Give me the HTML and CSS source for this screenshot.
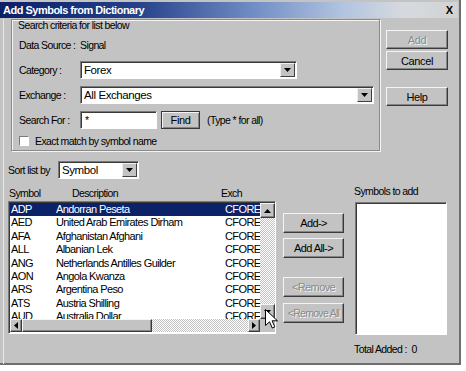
FILE: index.html
```html
<!DOCTYPE html>
<html>
<head>
<meta charset="utf-8">
<link rel="stylesheet" href="styles.css">
</head>
<body>
<div class="dialog">
  <div class="titlebar">
    <span class="title">Add Symbols from Dictionary</span>
    <span class="close">X</span>
  </div>
  <div class="body">
    <div class="top">
      <div class="group">
        <div class="legend">Search criteria for list below</div>
        <div class="row r-source"><span class="lbl">Data Source :</span><span>Signal</span></div>
        <div class="row r-cat"><span class="lbl">Category :</span>
          <div class="combo combo-cat"><span class="combo-text">Forex</span><span class="drop"><svg width="7" height="4" viewBox="0 0 7 4"><path d="M0 0h7L3.5 4z"/></svg></span></div>
        </div>
        <div class="row r-exch"><span class="lbl">Exchange :</span>
          <div class="combo combo-exch"><span class="combo-text">All Exchanges</span><span class="drop"><svg width="7" height="4" viewBox="0 0 7 4"><path d="M0 0h7L3.5 4z"/></svg></span></div>
        </div>
        <div class="row r-search"><span class="lbl">Search For :</span>
          <div class="field field-search">*</div>
          <div class="btn btn-find">Find</div>
          <span class="hint">(Type * for all)</span>
        </div>
        <div class="row r-check"><span class="checkbox"></span><span>Exact match by symbol name</span></div>
      </div>
      <div class="side">
        <div class="btn btn-side disabled b-add">Add</div>
        <div class="btn btn-side b-cancel">Cancel</div>
        <div class="btn btn-side b-help">Help</div>
      </div>
    </div>
    <div class="bottom">
      <div class="left">
        <div class="sortrow"><span class="sortlbl">Sort list by</span>
          <div class="combo combo-sort"><span class="combo-text">Symbol</span><span class="drop"><svg width="7" height="4" viewBox="0 0 7 4"><path d="M0 0h7L3.5 4z"/></svg></span></div>
        </div>
        <div class="headers"><span class="h-sym">Symbol</span><span class="h-desc">Description</span><span class="h-exch">Exch</span></div>
        <div class="list">
          <div class="list-main">
            <div class="rows">
              <div class="item sel"><span class="c-sym">ADP</span><span class="c-desc">Andorran Peseta</span><span class="c-exch">CFOREX</span></div>
              <div class="item"><span class="c-sym">AED</span><span class="c-desc">United Arab Emirates Dirham</span><span class="c-exch">CFOREX</span></div>
              <div class="item"><span class="c-sym">AFA</span><span class="c-desc">Afghanistan Afghani</span><span class="c-exch">CFOREX</span></div>
              <div class="item"><span class="c-sym">ALL</span><span class="c-desc">Albanian Lek</span><span class="c-exch">CFOREX</span></div>
              <div class="item"><span class="c-sym">ANG</span><span class="c-desc">Netherlands Antilles Guilder</span><span class="c-exch">CFOREX</span></div>
              <div class="item"><span class="c-sym">AON</span><span class="c-desc">Angola Kwanza</span><span class="c-exch">CFOREX</span></div>
              <div class="item"><span class="c-sym">ARS</span><span class="c-desc">Argentina Peso</span><span class="c-exch">CFOREX</span></div>
              <div class="item"><span class="c-sym">ATS</span><span class="c-desc">Austria Shilling</span><span class="c-exch">CFOREX</span></div>
              <div class="item"><span class="c-sym">AUD</span><span class="c-desc">Australia Dollar</span><span class="c-exch">CFOREX</span></div>
            </div>
            <div class="vscroll">
              <div class="sbtn"><svg width="7" height="4" viewBox="0 0 7 4"><path d="M3.5 0L7 4H0z"/></svg></div>
              <div class="track"></div>
              <div class="sbtn"><svg width="7" height="4" viewBox="0 0 7 4"><path d="M0 0h7L3.5 4z"/></svg></div>
            </div>
          </div>
          <div class="hscroll">
            <div class="sbtn hbtn"><svg width="4" height="7" viewBox="0 0 4 7"><path d="M4 0v7L0 3.5z"/></svg></div>
            <div class="thumb"></div>
            <div class="track"></div>
            <div class="sbtn hbtn"><svg width="4" height="7" viewBox="0 0 4 7"><path d="M0 0v7L4 3.5z"/></svg></div>
            <div class="corner"></div>
          </div>
          <svg class="cursor" width="13" height="20" viewBox="0 0 13 20"><path d="M0.5 0.5V16.5L4.5 12.8L7.3 19L9.8 17.9L7.1 11.8H12.5Z" fill="#fff" stroke="#000"/></svg>
        </div>
      </div>
      <div class="mid">
        <div class="btn btn-mid m-add">Add-&gt;</div>
        <div class="btn btn-mid m-addall">Add All-&gt;</div>
        <div class="btn btn-mid disabled m-rem">&lt;Remove</div>
        <div class="btn btn-mid disabled m-remall">&lt;Remove All</div>
      </div>
      <div class="target">
        <div class="t-lbl">Symbols to add</div>
        <div class="t-box"></div>
        <div class="t-total">Total Added :&nbsp; 0</div>
      </div>
    </div>
  </div>
</div>
</body>
</html>
```
FILE: styles.css
```css
* { box-sizing: border-box; }
html, body { margin: 0; padding: 0; background: #fff; }
body {
  font-family: "Liberation Sans", Arial, sans-serif;
  font-size: 10.5px;
  letter-spacing: -0.6px;
  color: #000;
  white-space: nowrap;
}
.dialog {
  width: 461px;
  height: 365px;
  background: #c3c3c3;
  padding-top: 2px;
  border-right: 2px solid #6e6e6e;
  border-bottom: 2px solid #6e6e6e;
  position: relative;
}
.titlebar {
  height: 16px;
  width: 458px;
  background: linear-gradient(90deg, #0b1f68 0%, #25418a 30%, #6f8cc4 55%, #b2c4e0 75%, #d6dadf 88%, #d0d2d4 100%);
  display: flex;
  align-items: center;
  justify-content: space-between;
  padding: 0 3px 0 3px;
}
.title {
  color: #fff;
  font-weight: bold;
  font-size: 11px;
  letter-spacing: -0.5px;
}
.close {
  width: 11px;
  height: 11px;
  background: #d4d4d4;
  font-weight: bold;
  font-size: 11px;
  letter-spacing: 0;
  line-height: 11px;
  text-align: center;
  color: #000;
}
.body {
  border-left: 1px solid #e8e8e8;
  margin-left: 3px;
  padding-left: 4px;
  height: 345px;
}
.top {
  display: flex;
  align-items: flex-start;
  margin-top: 1px;
}
.group {
  margin-left: 3px;
  width: 369px;
  border: 1px solid #8a8a8a;
  box-shadow: 1px 1px 0 #f4f4f4, inset 1px 1px 0 #f4f4f4;
  padding: 0 0 4px 6px;
}
.legend { height: 11px; line-height: 11px; }
.row { display: flex; align-items: center; padding-left: 1px; }
.lbl { width: 61px; flex: none; }
.r-source { margin-top: 7px; height: 14px; }
.r-cat { margin-top: 9px; height: 18px; }
.r-exch { margin-top: 7px; height: 18px; }
.r-search { margin-top: 7px; height: 18px; }
.r-check { margin-top: 6px; height: 11px; }

.combo, .field {
  height: 18px;
  background: #fff;
  border: 1px solid;
  border-color: #7a7a7a #fff #fff #7a7a7a;
  box-shadow: inset 1px 1px 0 #3a3a3a;
  display: flex;
  align-items: center;
}
.combo-text { flex: 1; padding-left: 3px; font-size: 11.5px; letter-spacing: -0.4px; }
.drop {
  width: 15px;
  height: 14px;
  margin-right: 1px;
  background: #c3c3c3;
  border: 1px solid;
  border-color: #f0f0f0 #404040 #404040 #f0f0f0;
  display: flex;
  align-items: center;
  justify-content: center;
}
.combo-cat { width: 217px; }
.combo-exch { width: 294px; }
.field-search { width: 77px; padding-left: 4px; }
.hint { margin-left: 7px; }
.checkbox {
  width: 10px;
  height: 10px;
  background: #fff;
  border: 1px solid;
  border-color: #7a7a7a #fff #fff #7a7a7a;
  margin: 0 6px 0 0;
}

.btn {
  background: #c3c3c3;
  border: 1px solid;
  border-color: #f4f4f4 #3a3a3a #3a3a3a #f4f4f4;
  box-shadow: inset -1px -1px 0 #858585;
  display: flex;
  align-items: center;
  justify-content: center;
  font-size: 11px;
  letter-spacing: -0.4px;
}
.btn.disabled { color: #8a8a8a; text-shadow: 1px 1px 0 #f4f4f4; }
.btn-find { width: 39px; height: 18px; margin-left: 4px; border-color: #3a3a3a; box-shadow: inset 1px 1px 0 #f4f4f4, inset -1px -1px 0 #858585; }

.side { margin-left: 6px; width: 62px; display: flex; flex-direction: column; }
.btn-side { height: 19px; }
.b-add { margin-top: 11px; }
.b-cancel { margin-top: 2px; }
.b-help { margin-top: 17px; }

.bottom { display: flex; align-items: flex-start; margin-top: 9px; }
.left { width: 268px; }
.sortrow { display: flex; align-items: center; height: 19px; }
.sortlbl { width: 50px; }
.combo-sort { width: 81px; }
.headers { display: flex; margin-top: 8px; height: 12px; line-height: 12px; padding-left: 1px; }
.h-sym { width: 63px; }
.h-desc { width: 149px; }

.list {
  margin-top: 2px;
  height: 133px;
  border: 1px solid;
  border-color: #7a7a7a #fff #fff #7a7a7a;
  box-shadow: inset 1px 1px 0 #3a3a3a;
  background: #fff;
  padding: 1px 0 0 1px;
  display: flex;
  flex-direction: column;
  position: relative;
}
.list-main { display: flex; height: 116px; }
.rows { flex: 1; overflow: hidden; }
.item {
  display: flex;
  height: 13.4px;
  line-height: 13.4px;
  font-size: 11px;
  letter-spacing: -0.6px;
}
.item.sel { background: #0c2268; color: #fff; }
.c-sym { width: 46px; flex: none; padding-left: 1px; }
.c-desc { width: 169px; flex: none; }
.c-exch { flex: none; }
.vscroll { width: 15px; display: flex; flex-direction: column; }
.sbtn {
  height: 15px;
  width: 15px;
  background: #c3c3c3;
  border: 1px solid;
  border-color: #f4f4f4 #3a3a3a #3a3a3a #f4f4f4;
  box-shadow: inset -1px -1px 0 #858585;
  display: flex;
  align-items: center;
  justify-content: center;
  flex: none;
}
.track {
  flex: 1;
  background: repeating-conic-gradient(#c3c3c3 0 25%, #fff 0 50%) 0 0 / 2px 2px;
}
.hscroll { display: flex; height: 13px; }
.hbtn { width: 12px; height: 13px; }
.thumb {
  width: 130px;
  background: #c3c3c3;
  border: 1px solid;
  border-color: #f4f4f4 #3a3a3a #3a3a3a #f4f4f4;
  box-shadow: inset -1px -1px 0 #858585;
}
.corner { width: 15px; background: #c3c3c3; }
.cursor { position: absolute; left: 256px; top: 107px; }

.mid { margin-left: 7px; width: 61px; padding-top: 53px; display: flex; flex-direction: column; }
.btn-mid { height: 20px; letter-spacing: -0.6px; }
.m-addall { margin-top: 5px; }
.m-rem { margin-top: 19px; }
.m-remall { margin-top: 6px; font-size: 10.5px; letter-spacing: -0.7px; }

.target { margin-left: 11px; width: 92px; padding-top: 26px; }
.t-lbl { height: 11px; line-height: 11px; margin-left: -1px; }
.t-box {
  margin-top: 5px;
  height: 133px;
  background: #fff;
  border: 1px solid;
  border-color: #7a7a7a #fff #fff #7a7a7a;
  box-shadow: inset 1px 1px 0 #3a3a3a;
}
.t-total { margin-top: 9px; height: 11px; line-height: 11px; margin-left: -1px; }
```
